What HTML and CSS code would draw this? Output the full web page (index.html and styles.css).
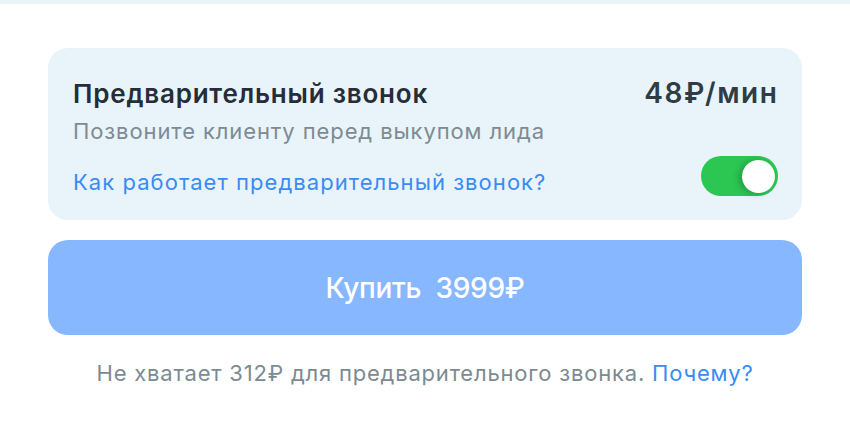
FILE: index.html
```html
<!DOCTYPE html>
<html lang="ru">
<head>
<meta charset="utf-8">
<link rel="stylesheet" href="styles.css">
</head>
<body>
<div class="topbar"></div>
<main class="wrap">
  <section class="card">
    <div class="row row-head">
      <div class="title">Предварительный звонок</div>
      <div class="price">48₽/мин</div>
    </div>
    <div class="sub">Позвоните клиенту перед выкупом лида</div>
    <div class="row row-link">
      <a class="link" href="#">Как работает предварительный звонок?</a>
      <span class="toggle"><span class="knob"></span></span>
    </div>
  </section>
  <button class="buy">Купить&nbsp; 3999₽</button>
  <p class="note">Не хватает 312₽ для предварительного звонка. <a class="link" href="#">Почему?</a></p>
</main>
</body>
</html>
```
FILE: styles.css
```css
* { box-sizing: border-box; }
html, body { margin: 0; padding: 0; background: #fff; }
body { font-family: Inter, "Noto Sans", sans-serif; width: 850px; height: 434px; overflow: hidden; }
.topbar { height: 4px; background: #e9f4f9; }
.wrap { padding: 44px 48px 0; display: flex; flex-direction: column; }
.card { background: #e8f4f9; border-radius: 20px; padding: 29px 24px 0 25px; height: 172px; }
.row { display: flex; justify-content: space-between; }
.row-head { align-items: baseline; padding-right: 1px; }
.title { font-size: 26px; font-weight: 600; color: #262c38; line-height: 32px; letter-spacing: 0.8px; }
.price { font-size: 28px; font-weight: 600; color: #2f3c45; line-height: 32px; letter-spacing: 1.6px; margin-right: -1.6px; }
.sub { font-size: 22px; color: #7e8a93; line-height: 28px; margin-top: 7px; letter-spacing: 0.9px; }
.row-link { margin-top: 11px; align-items: flex-end; }
.link { font-size: 22px; line-height: 28px; color: #3a8bf6; text-decoration: none; letter-spacing: 1.05px; }
.toggle { width: 77px; height: 40px; border-radius: 20px; background: #2cc653; position: relative; display: block; }
.knob { position: absolute; right: 3px; top: 3.5px; width: 33px; height: 33px; border-radius: 50%; background: #fff; box-shadow: -3px 1px 7px rgba(0,0,0,0.22); }
.buy { margin-top: 20px; height: 95px; border: 0; border-radius: 20px; background: #87b7fe; color: #fff; font-family: inherit; font-size: 28px; font-weight: 500; letter-spacing: -0.3px; width: 100%; padding: 0; }
.note { margin: 24px 0 0; text-align: center; font-size: 22px; line-height: 28px; color: #7d8a92; letter-spacing: 0.8px; }
.note .link { font-size: 22px; letter-spacing: 0.8px; }
```
